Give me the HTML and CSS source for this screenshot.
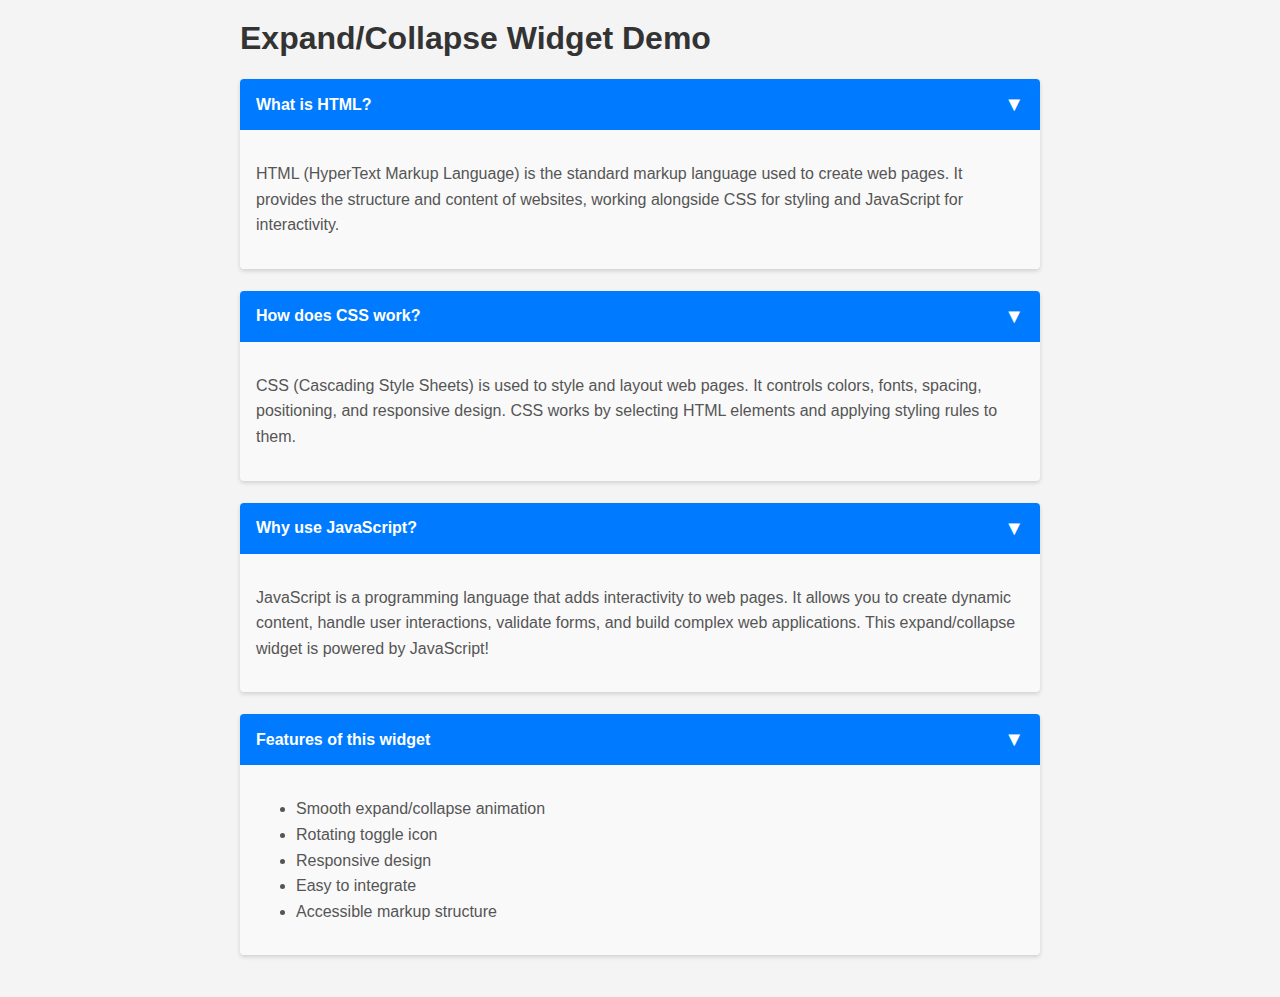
FILE: index.html
```html
<!DOCTYPE html>
<html lang="en">
<head>
<meta charset="utf-8">
<title>Expand/Collapse Widget Demo</title>
<link rel="stylesheet" href="styles.css">
</head>
<body>
<div class="container">
  <h1 class="title">Expand/Collapse Widget Demo</h1>

  <div class="item">
    <div class="header"><span class="label">What is HTML?</span><span class="icon">▼</span></div>
    <div class="content">
      <p>HTML (HyperText Markup Language) is the standard markup language used to create web pages. It provides the structure and content of websites, working alongside CSS for styling and JavaScript for interactivity.</p>
    </div>
  </div>

  <div class="item">
    <div class="header"><span class="label">How does CSS work?</span><span class="icon">▼</span></div>
    <div class="content">
      <p>CSS (Cascading Style Sheets) is used to style and layout web pages. It controls colors, fonts, spacing, positioning, and responsive design. CSS works by selecting HTML elements and applying styling rules to them.</p>
    </div>
  </div>

  <div class="item">
    <div class="header"><span class="label">Why use JavaScript?</span><span class="icon">▼</span></div>
    <div class="content">
      <p>JavaScript is a programming language that adds interactivity to web pages. It allows you to create dynamic content, handle user interactions, validate forms, and build complex web applications. This expand/collapse widget is powered by JavaScript!</p>
    </div>
  </div>

  <div class="item">
    <div class="header"><span class="label">Features of this widget</span><span class="icon">▼</span></div>
    <div class="content">
      <ul class="features">
        <li>Smooth expand/collapse animation</li>
        <li>Rotating toggle icon</li>
        <li>Responsive design</li>
        <li>Easy to integrate</li>
        <li>Accessible markup structure</li>
      </ul>
    </div>
  </div>
</div>
</body>
</html>
```

FILE: styles.css
```css
html, body {
  margin: 0;
  padding: 0;
}
body {
  background: #f4f4f4;
  font-family: "Liberation Sans", Arial, sans-serif;
  color: #333;
}
.container {
  max-width: 800px;
  margin: 0 auto;
  padding: 20px 0;
}
.title {
  font-size: 32px;
  line-height: 37px;
  margin: 0 0 22px;
  color: #333;
}
.item {
  background: #f9f9f9;
  border-radius: 4px;
  box-shadow: 0 2px 4px rgba(0, 0, 0, 0.15);
  margin-bottom: 22px;
  overflow: hidden;
}
.header {
  background: #007bff;
  color: #fff;
  display: flex;
  justify-content: space-between;
  align-items: center;
  height: 51px;
  padding: 0 16px 0 16px;
  box-sizing: border-box;
}
.label {
  font-weight: bold;
  font-size: 16px;
}
.icon {
  font-size: 20px;
}
.content {
  padding: 15px 16px;
  color: #555;
  font-size: 16px;
  line-height: 1.6;
}
.content p {
  margin: 16px 0;
}
.features {
  margin: 16px 0;
  padding-left: 40px;
}
```
